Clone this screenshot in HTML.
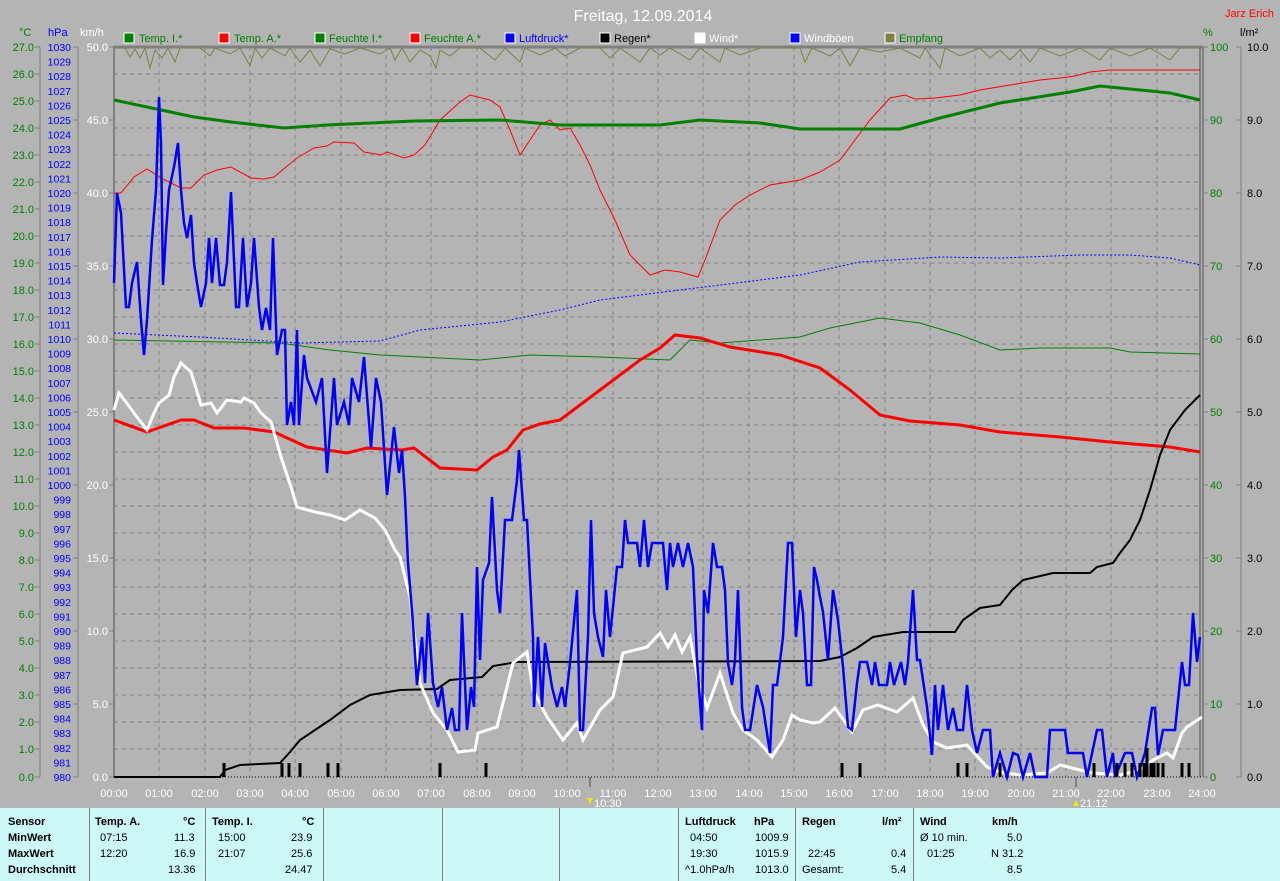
<!DOCTYPE html>
<html><head><meta charset="utf-8"><style>
html,body{margin:0;padding:0;background:#b4b4b4;}
svg{display:block;font-family:"Liberation Sans",sans-serif;font-size:11px;}
.tb{position:absolute;left:0;top:808px;width:1280px;height:73px;background:#ccf8f8;font-family:"Liberation Sans",sans-serif;font-size:11px;color:#000;}
.tb div{position:absolute;white-space:pre;}
.b{font-weight:bold;}
.sep{position:absolute;top:0;width:1px;height:73px;background:#808080;}
</style></head><body>
<svg width="1280" height="808" viewBox="0 0 1280 808" style="position:absolute;left:0;top:0">
<rect width="1280" height="808" fill="#b4b4b4"/>
<text x="643" y="21" fill="#fff" font-size="16" text-anchor="middle">Freitag, 12.09.2014</text>
<text x="1225" y="17" fill="#f00" font-size="11">Jarz Erich</text>
<g font-size="11">
<rect x="124" y="33" width="10" height="10" fill="#008000" stroke="#fff"/><text x="139" y="42" fill="#008000">Temp. I.*</text>
<rect x="219" y="33" width="10" height="10" fill="#f00" stroke="#fff"/><text x="234" y="42" fill="#008000">Temp. A.*</text>
<rect x="315" y="33" width="10" height="10" fill="#008000" stroke="#fff"/><text x="329" y="42" fill="#008000">Feuchte I.*</text>
<rect x="410" y="33" width="10" height="10" fill="#f00" stroke="#fff"/><text x="424" y="42" fill="#008000">Feuchte A.*</text>
<rect x="505" y="33" width="10" height="10" fill="#00f" stroke="#fff"/><text x="519" y="42" fill="#00f">Luftdruck*</text>
<rect x="600" y="33" width="10" height="10" fill="#000" stroke="#fff"/><text x="614" y="42" fill="#000">Regen*</text>
<rect x="695" y="33" width="10" height="10" fill="#fff" stroke="#fff"/><text x="709" y="42" fill="#fff">Wind*</text>
<rect x="790" y="33" width="10" height="10" fill="#00f" stroke="#fff"/><text x="804" y="42" fill="#fff">Windböen</text>
<rect x="885" y="33" width="10" height="10" fill="#808040" stroke="#fff"/><text x="899" y="42" fill="#008000">Empfang</text>
</g>
<text x="19" y="36" fill="#008000">°C</text>
<text x="48" y="36" fill="#00f">hPa</text>
<text x="80" y="36" fill="#fff">km/h</text>
<text x="1203" y="36" fill="#008000">%</text>
<text x="1240" y="36" fill="#000">l/m²</text>
<g stroke="#808080" stroke-width="1" stroke-dasharray="4,4" fill="none">
<path d="M114 74H1202M114 101H1202M114 128H1202M114 155H1202M114 182H1202M114 209H1202M114 236H1202M114 263H1202M114 290H1202M114 317H1202M114 344H1202M114 371H1202M114 398H1202M114 425H1202M114 452H1202M114 479H1202M114 506H1202M114 533H1202M114 560H1202M114 587H1202M114 614H1202M114 641H1202M114 668H1202M114 695H1202M114 722H1202M114 749H1202"/>
<path d="M159 47V777M205 47V777M250 47V777M295 47V777M341 47V777M386 47V777M431 47V777M477 47V777M522 47V777M567 47V777M613 47V777M658 47V777M703 47V777M749 47V777M794 47V777M839 47V777M885 47V777M930 47V777M975 47V777M1021 47V777M1066 47V777M1111 47V777M1157 47V777"/>
</g>
<g stroke="#808080" fill="none">
<path d="M40 47V777M78 47V777M1241 47V777"/>
<path d="M114 47H1203" stroke-width="3"/>
<path d="M114 46V778" stroke-width="2"/>
<path d="M1200 47V777M1203 47V777" stroke-width="2"/>
<path d="M590 777V787M1076 777V787" stroke-width="2"/>
</g>
<g stroke="#808080">
<path d="M35 47h5M35 74h5M35 101h5M35 128h5M35 155h5M35 182h5M35 209h5M35 236h5M35 263h5M35 290h5M35 317h5M35 344h5M35 371h5M35 398h5M35 425h5M35 452h5M35 479h5M35 506h5M35 533h5M35 560h5M35 587h5M35 614h5M35 641h5M35 668h5M35 695h5M35 722h5M35 749h5M35 777h5"/>
<path d="M73 47h5M73 120h5M73 193h5M73 266h5M73 339h5M73 412h5M73 485h5M73 558h5M73 631h5M73 704h5M73 777h5M109 47h5M109 120h5M109 193h5M109 266h5M109 339h5M109 412h5M109 485h5M109 558h5M109 631h5M109 704h5M109 777h5"/>
<path d="M1203 47h5M1203 120h5M1203 193h5M1203 266h5M1203 339h5M1203 412h5M1203 485h5M1203 558h5M1203 631h5M1203 704h5M1203 777h5M1236 47h5M1236 120h5M1236 193h5M1236 266h5M1236 339h5M1236 412h5M1236 485h5M1236 558h5M1236 631h5M1236 704h5M1236 777h5"/>
</g>
<g fill="#008000" text-anchor="end">
<text x="34" y="51">27.0</text><text x="34" y="78">26.0</text><text x="34" y="105">25.0</text><text x="34" y="132">24.0</text><text x="34" y="159">23.0</text><text x="34" y="186">22.0</text><text x="34" y="213">21.0</text><text x="34" y="240">20.0</text><text x="34" y="267">19.0</text><text x="34" y="294">18.0</text><text x="34" y="321">17.0</text><text x="34" y="348">16.0</text><text x="34" y="375">15.0</text><text x="34" y="402">14.0</text><text x="34" y="429">13.0</text><text x="34" y="456">12.0</text><text x="34" y="483">11.0</text><text x="34" y="510">10.0</text><text x="34" y="537">9.0</text><text x="34" y="564">8.0</text><text x="34" y="591">7.0</text><text x="34" y="618">6.0</text><text x="34" y="645">5.0</text><text x="34" y="672">4.0</text><text x="34" y="699">3.0</text><text x="34" y="726">2.0</text><text x="34" y="753">1.0</text><text x="34" y="781">0.0</text>
</g>
<g fill="#00f" text-anchor="end" font-size="10.5">
<text x="71" y="51">1030</text><text x="71" y="65.6">1029</text><text x="71" y="80.2">1028</text><text x="71" y="94.8">1027</text><text x="71" y="109.4">1026</text><text x="71" y="124">1025</text><text x="71" y="138.6">1024</text><text x="71" y="153.2">1023</text><text x="71" y="167.8">1022</text><text x="71" y="182.4">1021</text><text x="71" y="197">1020</text><text x="71" y="211.6">1019</text><text x="71" y="226.2">1018</text><text x="71" y="240.8">1017</text><text x="71" y="255.4">1016</text><text x="71" y="270">1015</text><text x="71" y="284.6">1014</text><text x="71" y="299.2">1013</text><text x="71" y="313.8">1012</text><text x="71" y="328.4">1011</text><text x="71" y="343">1010</text><text x="71" y="357.6">1009</text><text x="71" y="372.2">1008</text><text x="71" y="386.8">1007</text><text x="71" y="401.4">1006</text><text x="71" y="416">1005</text><text x="71" y="430.6">1004</text><text x="71" y="445.2">1003</text><text x="71" y="459.8">1002</text><text x="71" y="474.4">1001</text><text x="71" y="489">1000</text><text x="71" y="503.6">999</text><text x="71" y="518.2">998</text><text x="71" y="532.8">997</text><text x="71" y="547.4">996</text><text x="71" y="562">995</text><text x="71" y="576.6">994</text><text x="71" y="591.2">993</text><text x="71" y="605.8">992</text><text x="71" y="620.4">991</text><text x="71" y="635">990</text><text x="71" y="649.6">989</text><text x="71" y="664.2">988</text><text x="71" y="678.8">987</text><text x="71" y="693.4">986</text><text x="71" y="708">985</text><text x="71" y="722.6">984</text><text x="71" y="737.2">983</text><text x="71" y="751.8">982</text><text x="71" y="766.4">981</text><text x="71" y="781">980</text>
</g>
<g fill="#fff" text-anchor="end">
<text x="108" y="51">50.0</text><text x="108" y="124">45.0</text><text x="108" y="197">40.0</text><text x="108" y="270">35.0</text><text x="108" y="343">30.0</text><text x="108" y="416">25.0</text><text x="108" y="489">20.0</text><text x="108" y="562">15.0</text><text x="108" y="635">10.0</text><text x="108" y="708">5.0</text><text x="108" y="781">0.0</text>
</g>
<g fill="#008000">
<text x="1210" y="51">100</text><text x="1210" y="124">90</text><text x="1210" y="197">80</text><text x="1210" y="270">70</text><text x="1210" y="343">60</text><text x="1210" y="416">50</text><text x="1210" y="489">40</text><text x="1210" y="562">30</text><text x="1210" y="635">20</text><text x="1210" y="708">10</text><text x="1210" y="781">0</text>
</g>
<g fill="#000">
<text x="1247" y="51">10.0</text><text x="1247" y="124">9.0</text><text x="1247" y="197">8.0</text><text x="1247" y="270">7.0</text><text x="1247" y="343">6.0</text><text x="1247" y="416">5.0</text><text x="1247" y="489">4.0</text><text x="1247" y="562">3.0</text><text x="1247" y="635">2.0</text><text x="1247" y="708">1.0</text><text x="1247" y="781">0.0</text>
</g>
<g fill="#fff" text-anchor="middle">
<text x="114" y="797">00:00</text><text x="159" y="797">01:00</text><text x="205" y="797">02:00</text><text x="250" y="797">03:00</text><text x="295" y="797">04:00</text><text x="341" y="797">05:00</text><text x="386" y="797">06:00</text><text x="431" y="797">07:00</text><text x="477" y="797">08:00</text><text x="522" y="797">09:00</text><text x="567" y="797">10:00</text><text x="613" y="797">11:00</text><text x="658" y="797">12:00</text><text x="703" y="797">13:00</text><text x="749" y="797">14:00</text><text x="794" y="797">15:00</text><text x="839" y="797">16:00</text><text x="885" y="797">17:00</text><text x="930" y="797">18:00</text><text x="975" y="797">19:00</text><text x="1021" y="797">20:00</text><text x="1066" y="797">21:00</text><text x="1111" y="797">22:00</text><text x="1157" y="797">23:00</text><text x="1202" y="797">24:00</text>
</g>
<path d="M587 798l3 6 3-6z" fill="#ee0"/><text x="594" y="807" fill="#fff">10:30</text>
<path d="M1073 806l3-6 3 6z" fill="#ee0"/><text x="1080" y="807" fill="#fff">21:12</text>
<path d="M114 777H1202" stroke="#000" stroke-dasharray="1,2"/>
<polyline fill="none" stroke="#808040" points="114,48 125,48 130,57 135,49 140,58 145,48 150,68 155,50 162,58 168,48 175,62 180,48 200,48 210,56 215,48 230,54 240,48 250,66 255,48 262,58 270,48 285,56 290,48 300,62 310,50 320,66 330,49 345,54 360,48 380,54 390,48 395,60 402,48 410,62 420,50 430,56 436,68 440,50 450,56 460,48 480,48 495,60 505,48 520,62 525,48 540,55 555,48 565,56 580,48 600,48 610,58 620,48 640,62 650,48 660,55 670,48 690,60 700,48 720,62 725,48 740,55 760,48 800,48 805,62 812,48 830,56 840,48 850,66 860,48 880,52 900,48 920,58 925,48 940,68 945,48 960,56 980,48 990,58 1000,50 1010,60 1020,50 1030,62 1040,48 1060,56 1080,48 1100,60 1110,48 1130,56 1150,48 1170,60 1180,48 1202,48"/>
<polyline fill="none" stroke="#f00" stroke-width="1" points="114,193 121,193 134,177 147,169 161,178 181,188 191,188 204,175 217,170 231,167 251,178 264,179 274,177 297,158 314,148 327,146 334,142 354,143 364,152 381,155 387,152 404,158 414,155 425,145 440,120 460,102 470,95 490,100 500,107 510,130 520,155 530,140 540,125 550,120 560,130 570,128 580,145 590,165 600,190 615,220 630,255 650,275 665,270 680,272 698,277 705,260 720,220 735,205 750,195 770,185 800,180 820,172 840,160 855,140 870,120 890,98 905,95 915,99 935,98 960,95 980,90 1010,85 1040,80 1060,78 1075,76 1090,72 1110,70 1200,70"/>
<polyline fill="none" stroke="#00f" stroke-dasharray="2,2" points="114,333 200,337 300,343 380,341 420,330 500,322 560,310 600,300 680,290 720,285 800,275 860,262 940,257 1000,258 1080,255 1130,255 1170,258 1200,265"/>
<polyline fill="none" stroke="#008000" points="114,340 280,343 330,350 380,355 480,360 530,355 600,357 670,360 690,340 720,343 760,340 800,337 830,328 880,318 920,323 960,335 1000,350 1040,348 1110,348 1130,352 1200,354"/>
<polyline fill="none" stroke="#008000" stroke-width="3" points="114,100 161,110 194,117 231,122 284,128 327,125 414,121 500,120 560,125 660,125 700,120 760,123 800,129 900,129 940,118 1000,103 1070,92 1100,86 1130,89 1170,93 1200,100"/>
<polyline fill="none" stroke="#f00" stroke-width="3" points="114,420 147,432 181,420 194,420 214,428 244,428 274,432 307,447 347,453 367,448 401,450 414,448 440,468 477,470 493,457 507,450 523,430 540,424 560,420 580,405 600,390 620,375 640,360 660,348 675,335 700,338 730,347 780,355 820,368 850,390 880,415 910,421 960,425 1000,432 1060,437 1110,442 1170,447 1200,452"/>
<polyline fill="none" stroke="#000" stroke-width="2" points="114,777 220,777 225,770 240,765 280,763 290,752 300,740 315,730 330,720 350,705 370,695 400,690 437,689 450,680 482,677 493,666 517,662 820,661 840,657 857,648 873,637 903,632 955,632 963,620 980,608 1000,605 1012,590 1023,580 1053,573 1090,573 1097,567 1113,563 1120,553 1130,540 1140,520 1150,490 1160,455 1170,430 1185,410 1200,395"/>
<polyline fill="none" stroke="#fff" stroke-width="3" points="114,410 119,393 126,402 134,413 147,430 154,413 159,403 169,395 174,377 181,363 191,372 201,405 211,403 217,413 227,400 241,402 244,398 254,403 261,413 271,422 281,457 291,487 297,507 315,512 330,515 345,520 360,510 375,518 385,530 395,550 400,557 410,597 420,683 433,713 447,730 458,752 475,750 478,733 497,727 513,663 527,652 533,690 547,717 563,740 577,723 583,740 600,710 613,697 623,653 647,647 660,633 668,647 675,635 682,652 690,637 698,680 707,708 720,673 733,713 743,730 757,740 772,757 783,740 792,715 800,720 813,723 820,722 835,708 852,732 863,710 878,705 897,712 913,698 923,725 933,742 947,748 967,745 987,767 1000,772 1020,775 1047,773 1060,765 1080,770 1093,773 1120,775 1140,770 1153,760 1167,753 1173,758 1182,733 1187,727 1202,717"/>
<polyline fill="none" stroke="#00f" stroke-width="2.5" stroke-linejoin="miter" points="114,283 117,193 121,213 126,307 129,307 132,283 137,262 141,320 144,355 147,320 152,240 156,190 159,97 161,143 163,285 166,233 169,190 174,167 178,143 181,190 184,223 187,238 191,215 194,263 197,283 201,307 206,283 209,238 212,283 216,238 220,285 224,285 227,262 231,192 235,283 236,307 239,307 243,238 247,307 251,283 254,238 259,307 262,330 266,308 270,330 273,238 277,355 282,330 285,330 287,425 291,402 294,425 297,330 299,425 304,355 307,378 316,402 322,378 327,473 334,378 337,425 344,402 349,425 352,378 359,402 364,357 371,448 376,378 381,402 387,495 394,427 399,473 402,450 405,497 408,563 413,623 417,685 422,637 425,683 428,613 433,683 438,707 442,687 447,730 452,708 455,730 459,730 462,613 467,730 471,687 474,707 477,567 480,660 483,580 489,563 492,497 497,590 500,613 505,520 512,520 517,480 519,450 524,520 527,520 533,637 534,707 538,637 542,707 545,643 552,687 557,707 562,687 565,707 570,663 577,590 580,730 583,730 588,637 591,520 594,613 598,637 603,657 606,590 610,637 617,567 622,567 625,520 628,543 637,543 640,567 644,520 648,567 652,543 663,543 667,590 670,543 673,567 678,543 683,567 688,543 693,567 697,660 702,730 704,590 708,613 713,543 717,567 722,567 725,590 728,663 732,685 735,660 738,590 742,707 745,730 750,730 757,685 763,707 770,753 773,685 777,685 783,637 788,543 792,543 796,637 800,590 803,613 807,685 811,685 814,567 817,580 820,597 823,612 828,660 833,590 838,620 843,667 848,727 852,730 857,683 860,662 867,662 872,685 875,662 879,685 887,685 890,662 894,685 901,662 905,685 908,662 913,590 917,660 920,660 927,707 932,755 935,685 938,730 943,685 948,730 953,708 957,730 963,730 967,685 972,730 977,753 983,730 990,730 993,777 1000,753 1007,777 1013,753 1018,755 1023,777 1030,753 1035,777 1047,777 1050,730 1065,730 1068,753 1083,753 1087,777 1097,730 1102,730 1107,777 1113,753 1115,777 1125,753 1132,753 1137,777 1145,753 1152,708 1155,708 1158,755 1163,730 1175,730 1182,662 1185,685 1189,685 1193,613 1197,662 1200,637"/>
<path stroke="#000" stroke-width="3" d="M224 777v-14M282 777v-14M289 777v-14M300 777v-14M328 777v-14M338 777v-14M440 777v-14M486 777v-14M842 777v-14M860 777v-14M958 777v-14M967 777v-14M1000 777v-14M1094 777v-14M1117 777v-14M1125 777v-14M1132 777v-14M1140 777v-14M1144 777v-14M1147 777v-29M1151 777v-14M1154 777v-14M1158 777v-14M1163 777v-14M1182 777v-14M1189 777v-14"/>
</svg>
<div class="tb">
<div class="sep" style="left:89px"></div><div class="sep" style="left:205px"></div><div class="sep" style="left:323px"></div><div class="sep" style="left:442px"></div><div class="sep" style="left:559px"></div><div class="sep" style="left:678px"></div><div class="sep" style="left:795px"></div><div class="sep" style="left:913px"></div>
<div class="b" style="left:8px;top:8px">Sensor</div><div class="b" style="left:8px;top:24px">MinWert</div><div class="b" style="left:8px;top:40px">MaxWert</div><div class="b" style="left:8px;top:56px">Durchschnitt</div>
<div class="b" style="left:95px;top:8px">Temp. A.</div><div class="b" style="left:183px;top:8px">°C</div>
<div style="left:100px;top:24px">07:15</div><div style="left:174px;top:24px">11.3</div>
<div style="left:100px;top:40px">12:20</div><div style="left:174px;top:40px">16.9</div>
<div style="left:168px;top:56px">13.36</div>
<div class="b" style="left:212px;top:8px">Temp. I.</div><div class="b" style="left:302px;top:8px">°C</div>
<div style="left:218px;top:24px">15:00</div><div style="left:291px;top:24px">23.9</div>
<div style="left:218px;top:40px">21:07</div><div style="left:291px;top:40px">25.6</div>
<div style="left:285px;top:56px">24.47</div>
<div class="b" style="left:685px;top:8px">Luftdruck</div><div class="b" style="left:754px;top:8px">hPa</div>
<div style="left:690px;top:24px">04:50</div><div style="left:755px;top:24px">1009.9</div>
<div style="left:690px;top:40px">19:30</div><div style="left:755px;top:40px">1015.9</div>
<div style="left:685px;top:56px">^1.0hPa/h</div><div style="left:755px;top:56px">1013.0</div>
<div class="b" style="left:802px;top:8px">Regen</div><div class="b" style="left:882px;top:8px">l/m²</div>
<div style="left:808px;top:40px">22:45</div><div style="left:891px;top:40px">0.4</div>
<div style="left:802px;top:56px">Gesamt:</div><div style="left:891px;top:56px">5.4</div>
<div class="b" style="left:920px;top:8px">Wind</div><div class="b" style="left:992px;top:8px">km/h</div>
<div style="left:920px;top:24px">Ø 10 min.</div><div style="left:1007px;top:24px">5.0</div>
<div style="left:927px;top:40px">01:25</div><div style="left:991px;top:40px">N 31.2</div>
<div style="left:1007px;top:56px">8.5</div>
</div>
</body></html>
